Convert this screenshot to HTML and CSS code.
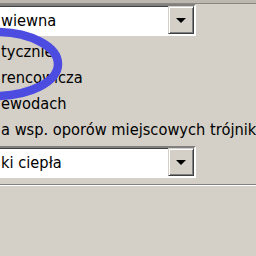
FILE: index.html
```html
<!DOCTYPE html>
<html lang="pl">
<head>
<meta charset="UTF-8" />
<title>Opcje obliczeń</title>
<link rel="stylesheet" href="styles.css">
</head>
<body>

<div class="panel">
  <div class="topline"></div>

  <!-- combo 1 -->
  <div class="combo">
    <span class="value">wiewna</span>
    <span class="btn"><span class="arrow"></span></span>
  </div>

  <!-- options (checkbox column is off-screen to the left) -->
  <ul class="opts">
    <li>tycznie</li>
    <li>rencowicza</li>
    <li>ewodach</li>
    <li>a wsp. oporów miejscowych trójnik</li>
  </ul>

  <!-- combo 2 -->
  <div class="combo">
    <span class="value">ki ciepła</span>
    <span class="btn"><span class="arrow"></span></span>
  </div>

  <div class="sep"></div>

  <!-- hand-drawn highlight -->
  <svg class="mark" width="256" height="256" viewBox="0 0 256 256">
    <ellipse cx="-5" cy="64" rx="63" ry="32" fill="none" stroke="#4c4ce0" stroke-width="8.5"/>
  </svg>
</div>

</body>
</html>
```

FILE: styles.css
```css
body{
  margin:0;
  background:#d4d0c8;
  font-family:"DejaVu Sans Condensed","DejaVu Sans",Tahoma,sans-serif;
  font-size:16.3px;
  color:#000;
  overflow:hidden;
}
.panel{position:relative;width:256px;height:256px;overflow:hidden;}

.topline{height:3px;background:#bcb8b0;border-bottom:1px solid #8c8880;}

/* sunken combobox */
.combo{
  display:flex;align-items:center;
  width:206px;height:32px;box-sizing:border-box;
  margin-left:-10px;
  border:2px solid;
  border-color:#808080 #fff #fff #808080;
  background:#fff;
  box-shadow:inset 1px 1px 0 #404040;
}
.combo + .opts{margin-top:3px;}
.value{flex:1;padding-left:9px;white-space:nowrap;}
.btn{
  display:flex;align-items:center;justify-content:center;
  width:26px;height:28px;box-sizing:border-box;
  background:#d4d0c8;
  border:1px solid;
  border-color:#d4d0c8 #404040 #404040 #d4d0c8;
  box-shadow:inset 1px 1px 0 #fff,inset -1px -1px 0 #808080;
}
.arrow{
  width:0;height:0;
  border-left:5px solid transparent;
  border-right:5px solid transparent;
  border-top:5px solid #000;
}

.opts{list-style:none;margin:0 0 3px;padding:0;}
.opts li{height:26px;line-height:26px;white-space:nowrap;padding-left:1px;}

.sep{margin-top:6px;border-top:1px solid #808080;border-bottom:1px solid #fff;}

.mark{position:absolute;left:0;top:0;pointer-events:none;}
```
